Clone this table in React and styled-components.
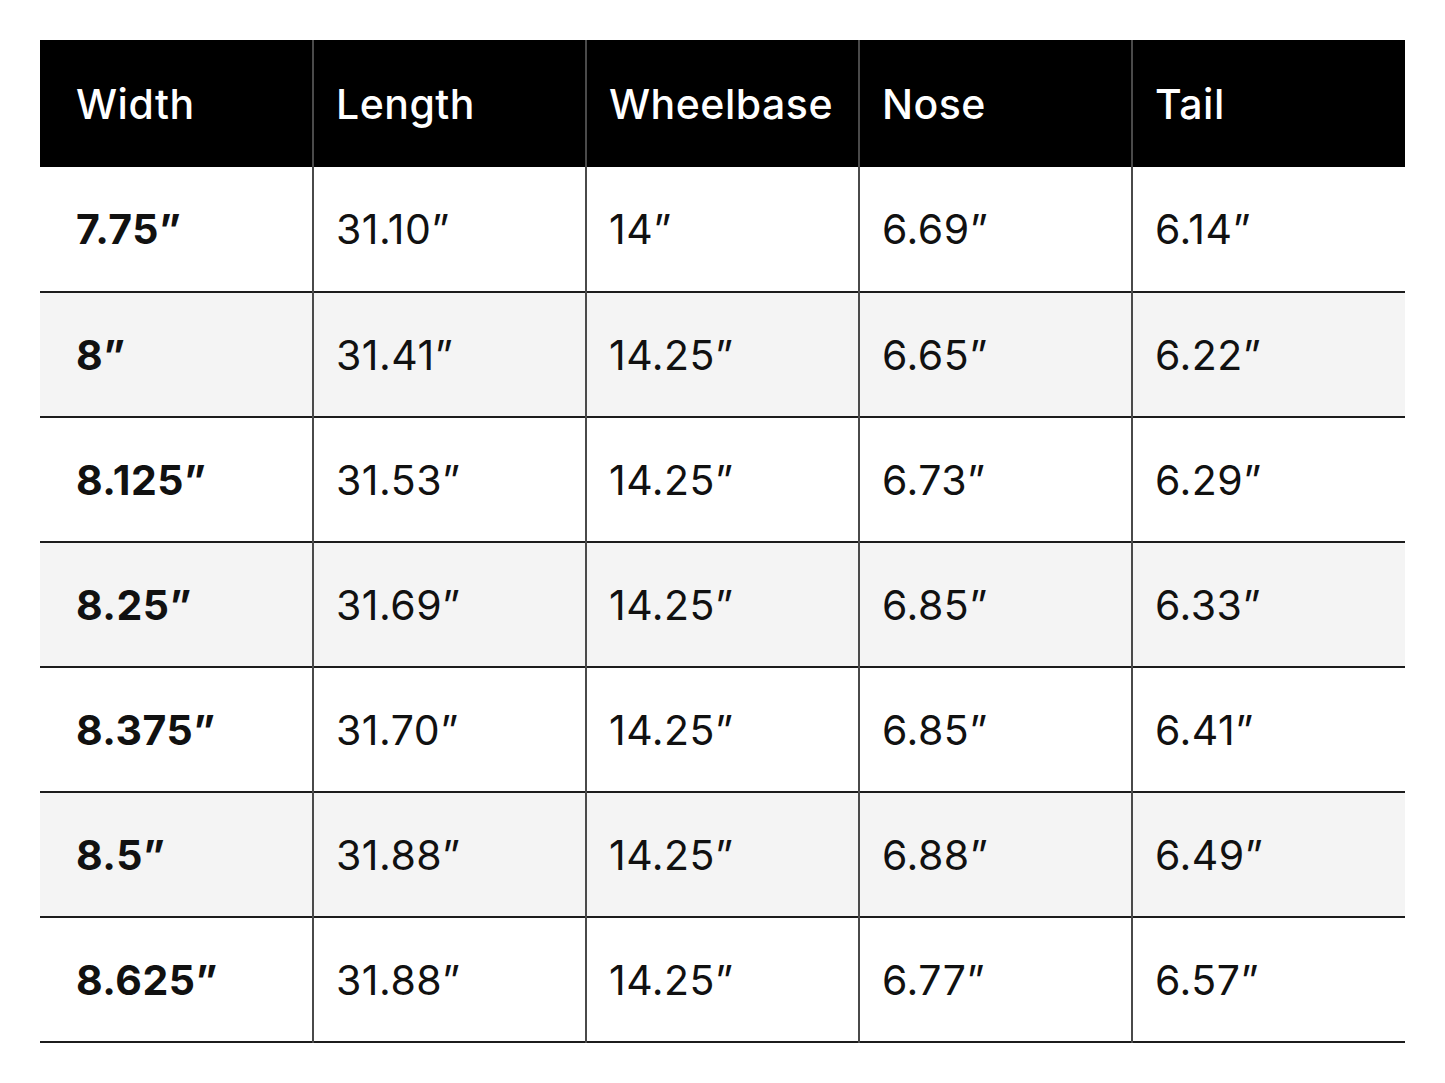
import React from "react";
import styled, { createGlobalStyle } from "styled-components";

const GlobalStyle = createGlobalStyle`
  body {
    margin: 0;
    background: #ffffff;
    font-family: Inter, "Liberation Sans", sans-serif;
  }
`;

const columns = ["Width", "Length", "Wheelbase", "Nose", "Tail"];

const sizes = [
  ["7.75”", "31.10”", "14”", "6.69”", "6.14”"],
  ["8”", "31.41”", "14.25”", "6.65”", "6.22”"],
  ["8.125”", "31.53”", "14.25”", "6.73”", "6.29”"],
  ["8.25”", "31.69”", "14.25”", "6.85”", "6.33”"],
  ["8.375”", "31.70”", "14.25”", "6.85”", "6.41”"],
  ["8.5”", "31.88”", "14.25”", "6.88”", "6.49”"],
  ["8.625”", "31.88”", "14.25”", "6.77”", "6.57”"],
];

const App = () => {
  return (
    <Page>
      <GlobalStyle />
      <SizeTable>
        <thead>
          <tr>
            {columns.map((col, idx) => (
              <HeadCell key={col} $first={idx === 0}>
                {col}
              </HeadCell>
            ))}
          </tr>
        </thead>
        <tbody>
          {sizes.map((row, rIdx) => (
            <Row key={rIdx} $shaded={rIdx % 2 === 1}>
              {row.map((val, cIdx) => (
                <Cell key={cIdx} $first={cIdx === 0}>
                  {val}
                </Cell>
              ))}
            </Row>
          ))}
        </tbody>
      </SizeTable>
    </Page>
  );
};

export default App;

const Page = styled.div`
  padding: 40px;
`;

const SizeTable = styled.table`
  width: 1365px;
  border-collapse: collapse;
  table-layout: fixed;
  color: #111111;
`;

const HeadCell = styled.th`
  height: 127px;
  box-sizing: border-box;
  padding: 0 0 0 ${({ $first }) => ($first ? "36px" : "22px")};
  background: #000000;
  color: #ffffff;
  font-size: 41px;
  font-weight: 500;
  text-align: left;
  letter-spacing: 0.5px;
  border-left: ${({ $first }) => ($first ? "none" : "2px solid #4a4a4a")};
`;

const Row = styled.tr`
  background: ${({ $shaded }) => ($shaded ? "#f4f4f4" : "#ffffff")};
  border-bottom: 2px solid #1c1c1c;
`;

const Cell = styled.td`
  height: 125px;
  box-sizing: border-box;
  padding: 0 0 0 ${({ $first }) => ($first ? "36px" : "22px")};
  font-size: 41px;
  font-weight: ${({ $first }) => ($first ? 700 : 400)};
  letter-spacing: 0.5px;
  border-left: ${({ $first }) => ($first ? "none" : "2px solid #4a4a4a")};
`;
